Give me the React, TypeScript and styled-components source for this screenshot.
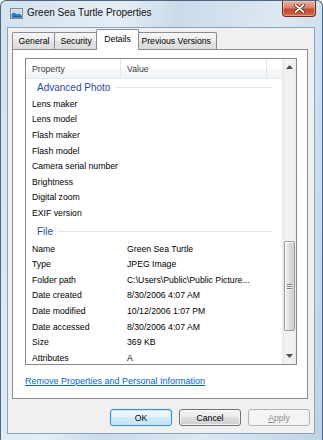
import styled, { createGlobalStyle, css } from "styled-components";

const GlobalStyle = createGlobalStyle`
	html, body {
		margin: 0;
		padding: 0;
		background: #ffffff;
		overflow: hidden;
	}
	body {
		font-family: "Liberation Sans", Arial, sans-serif;
		font-size: 8.7px;
		color: #000;
	}
	* {
		box-sizing: border-box;
	}
`;

const advancedPhoto = [
	"Lens maker",
	"Lens model",
	"Flash maker",
	"Flash model",
	"Camera serial number",
	"Brightness",
	"Digital zoom",
	"EXIF version",
];

const fileProps: [string, string][] = [
	["Name", "Green Sea Turtle"],
	["Type", "JPEG Image"],
	["Folder path", "C:\\Users\\Public\\Public Picture..."],
	["Date created", "8/30/2006 4:07 AM"],
	["Date modified", "10/12/2006 1:07 PM"],
	["Date accessed", "8/30/2006 4:07 AM"],
	["Size", "369 KB"],
	["Attributes", "A"],
];

const tabs = ["General", "Security", "Details", "Previous Versions"];

const Window = styled.div`
	width: 323px;
	height: 440px;
	display: flex;
	flex-direction: column;
	border: 1px solid #4e6781;
	border-bottom: none;
	border-radius: 6px 6px 0 0;
	background: linear-gradient(
		100deg,
		#d3e2ee 0%,
		#e4eef6 30%,
		#c9dbea 45%,
		#dce8f2 70%,
		#bcd3e7 100%
	);
	overflow: hidden;
`;

const TitleBar = styled.div`
	height: 26px;
	flex: none;
	display: flex;
	align-items: flex-start;
	padding-left: 9px;
`;

const TitleIcon = styled.svg`
	margin-top: 7px;
	flex: none;
`;

const TitleText = styled.span`
	margin: 6px 0 0 4px;
	font-size: 10px;
	line-height: 12px;
	color: #111;
	flex: 1;
`;

const CloseButton = styled.div`
	width: 34px;
	height: 16px;
	margin-right: 6px;
	border: 1px solid #6b2a1c;
	border-top: none;
	border-radius: 0 0 4px 4px;
	background: linear-gradient(#e8b3a4 0%, #d9806b 45%, #c5472f 55%, #d06a4e 100%);
	box-shadow: inset 0 0 0 1px rgba(255, 220, 210, 0.5);
	display: flex;
	align-items: center;
	justify-content: center;
`;

const Client = styled.div`
	flex: 1;
	margin: 0 7px 6px 6px;
	border: 1px solid #8da2b8;
	background: #f0f0f0;
	display: flex;
	flex-direction: column;
`;

const TabStrip = styled.div`
	height: 21px;
	flex: none;
	display: flex;
	align-items: flex-end;
	padding-left: 4px;
`;

const Tab = styled.div<{ $active?: boolean }>`
	height: 17px;
	padding: 0 5.5px;
	display: flex;
	align-items: center;
	border: 1px solid #898c95;
	border-bottom: none;
	border-radius: 2px 2px 0 0;
	background: linear-gradient(#f6f6f6, #ebebeb 50%, #e3e3e3 50%, #dcdcdc);
	white-space: nowrap;
	& + & {
		margin-left: -1px;
	}
	${(p) =>
		p.$active &&
		css`
			position: relative;
			z-index: 1;
			height: 21px;
			margin: 0 -2px -1px;
			padding: 0 7px 3px;
			background: #ffffff;
			& + & {
				margin-left: -2px;
			}
		`}
`;

const Panel = styled.div`
	height: 350px;
	flex: none;
	margin: 0 6px 0 4px;
	border: 1px solid #898c95;
	background: #ffffff;
	padding: 8px 10px 0 12px;
	display: flex;
	flex-direction: column;
`;

const ListView = styled.div`
	height: 307px;
	border: 1px solid #828790;
	display: flex;
	overflow: hidden;
`;

const ListArea = styled.div`
	flex: 1;
	display: flex;
	flex-direction: column;
	overflow: hidden;
`;

const HeaderRow = styled.div`
	height: 20px;
	flex: none;
	display: grid;
	grid-template-columns: 95px 146px 1fr;
	border-bottom: 1px solid #e4e7ec;
	background: linear-gradient(#ffffff 0%, #ffffff 55%, #f6f8fa 55%, #f1f4f7 100%);
`;

const HeaderCell = styled.div<{ $last?: boolean }>`
	display: flex;
	align-items: center;
	padding-left: 6px;
	color: #3a3a3a;
	border-right: ${(p) => (p.$last ? "none" : "1px solid #e3e6ea")};
`;

const GroupHeader = styled.div<{ $tall?: boolean }>`
	height: ${(p) => (p.$tall ? 20 : 17)}px;
	flex: none;
	display: flex;
	align-items: center;
	padding: ${(p) => (p.$tall ? "1px" : "0")} 10px 0 11px;
	font-size: 10px;
	color: #2b4a9b;
	&::after {
		content: "";
		flex: 1;
		height: 1px;
		margin-left: 5px;
		background: #e0e4ec;
	}
`;

const Row = styled.div`
	height: 15.6px;
	flex: none;
	display: grid;
	grid-template-columns: 95px 146px 1fr;
	align-items: center;
	white-space: nowrap;
`;

const Cell = styled.span`
	padding-left: 6px;
	overflow: hidden;
`;

const ScrollBar = styled.div`
	width: 14px;
	flex: none;
	display: flex;
	flex-direction: column;
	background: linear-gradient(90deg, #e6e6e6, #f3f3f3 20%, #f1f1f1 80%, #e9e9e9);
	border-left: 1px solid #ececec;
`;

const ArrowButton = styled.div`
	height: 16px;
	flex: none;
	display: flex;
	align-items: center;
	justify-content: center;
`;

const Track = styled.div`
	flex: 1;
	padding: 166px 1px 0 1px;
`;

const Thumb = styled.div`
	height: 90px;
	border: 1px solid #9a9a9a;
	border-radius: 2px;
	background: linear-gradient(90deg, #eeeeee 0%, #e2e2e2 45%, #d4d6d9 55%, #cfd1d4 100%);
	box-shadow: inset 1px 1px 0 #fdfdfd;
	display: flex;
	flex-direction: column;
	align-items: center;
	justify-content: center;
	gap: 1px;
`;

const Grip = styled.div`
	width: 5px;
	height: 1px;
	background: #7b7b7b;
	box-shadow: 0 1px 0 #f8f8f8;
`;

const RemoveLink = styled.a`
	margin-top: 10px;
	font-size: 9px;
	line-height: 12px;
	color: #0066cc;
	text-decoration: underline;
	align-self: flex-start;
	cursor: pointer;
`;

const Footer = styled.div`
	flex: 1;
	display: flex;
	justify-content: flex-end;
	align-items: flex-start;
	gap: 7px;
	padding: 10px 4px 0 0;
`;

const Button = styled.div<{ $variant?: "default" | "disabled" }>`
	width: 62px;
	height: 17px;
	border-radius: 3px;
	display: flex;
	align-items: center;
	justify-content: center;
	border: 1px solid #707070;
	background: linear-gradient(#f4f4f4, #ebebeb 50%, #dddddd 50%, #d0d0d0);
	box-shadow: inset 0 0 0 1px rgba(255, 255, 255, 0.7);
	${(p) =>
		p.$variant === "default" &&
		css`
			border-color: #3c8fc8;
			background: linear-gradient(#f3fafe, #e4f3fc 50%, #d3ebf9 50%, #c6e4f6);
			box-shadow: inset 0 0 0 1px #bfe9fd, 0 0 1px #7dc4ec;
		`}
	${(p) =>
		p.$variant === "disabled" &&
		css`
			border-color: #adb2b5;
			background: #f4f4f4;
			box-shadow: none;
			color: #8c8c8c;
		`}
`;

function PictureIcon() {
	return (
		<TitleIcon width="13" height="11" viewBox="0 0 13 11">
			<rect x="0.5" y="0.5" width="12" height="10" fill="#f4f6f8" stroke="#7d8a97" />
			<rect x="1.5" y="1.5" width="10" height="8" fill="#c9dbea" />
			<path d="M1.5 9.5 L1.5 6 L4 4.5 L7 6.5 L9 5.5 L11.5 7 L11.5 9.5 Z" fill="#2f7cbd" />
			<path d="M1.5 9.5 L5 7.5 L8 8.5 L11.5 8 L11.5 9.5 Z" fill="#1c5a94" />
		</TitleIcon>
	);
}

export default function App() {
	return (
		<>
			<GlobalStyle />
			<Window>
				<TitleBar>
					<PictureIcon />
					<TitleText>Green Sea Turtle Properties</TitleText>
					<CloseButton>
						<svg width="11" height="9" viewBox="0 0 11 9">
							<path
								d="M1.5 1 L9.5 8 M9.5 1 L1.5 8"
								stroke="#4a1a10"
								strokeWidth="3.4"
								strokeLinecap="round"
							/>
							<path
								d="M1.5 1 L9.5 8 M9.5 1 L1.5 8"
								stroke="#ffffff"
								strokeWidth="1.8"
								strokeLinecap="round"
							/>
						</svg>
					</CloseButton>
				</TitleBar>
				<Client>
					<TabStrip>
						{tabs.map((t) => (
							<Tab key={t} $active={t === "Details"}>
								{t}
							</Tab>
						))}
					</TabStrip>
					<Panel>
						<ListView>
							<ListArea>
								<HeaderRow>
									<HeaderCell>Property</HeaderCell>
									<HeaderCell>Value</HeaderCell>
									<HeaderCell $last />
								</HeaderRow>
								<GroupHeader>Advanced Photo</GroupHeader>
								{advancedPhoto.map((name) => (
									<Row key={name}>
										<Cell>{name}</Cell>
										<Cell />
									</Row>
								))}
								<GroupHeader $tall>File</GroupHeader>
								{fileProps.map(([name, value]) => (
									<Row key={name}>
										<Cell>{name}</Cell>
										<Cell>{value}</Cell>
									</Row>
								))}
							</ListArea>
							<ScrollBar>
								<ArrowButton>
									<svg width="7" height="4" viewBox="0 0 7 4">
										<path d="M0 4 L3.5 0 L7 4 Z" fill="#4d4d4d" />
									</svg>
								</ArrowButton>
								<Track>
									<Thumb>
										<Grip />
										<Grip />
										<Grip />
									</Thumb>
								</Track>
								<ArrowButton>
									<svg width="7" height="4" viewBox="0 0 7 4">
										<path d="M0 0 L7 0 L3.5 4 Z" fill="#4d4d4d" />
									</svg>
								</ArrowButton>
							</ScrollBar>
						</ListView>
						<RemoveLink>Remove Properties and Personal Information</RemoveLink>
					</Panel>
					<Footer>
						<Button $variant="default">OK</Button>
						<Button>Cancel</Button>
						<Button $variant="disabled">
							<span>
								<u>A</u>pply
							</span>
						</Button>
					</Footer>
				</Client>
			</Window>
		</>
	);
}
